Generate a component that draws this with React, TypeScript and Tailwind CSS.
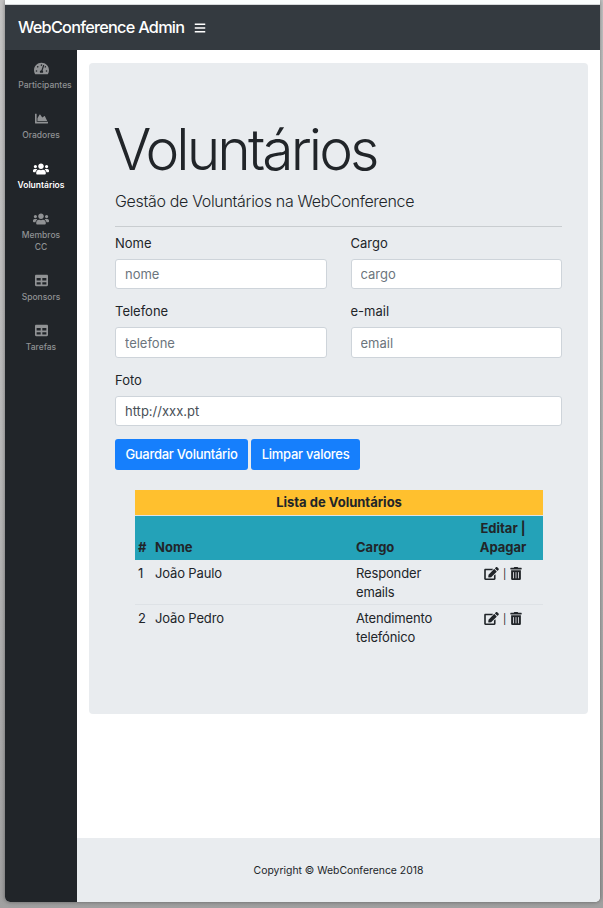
import type { ReactNode } from "react";
import {
  FaBars,
  FaChartArea,
  FaEdit,
  FaTable,
  FaTachometerAlt,
  FaTrashAlt,
  FaUsers,
} from "react-icons/fa";

function NavItem({
  icon,
  label,
  active = false,
  height = "h-[50px]",
}: {
  icon: ReactNode;
  label: ReactNode;
  active?: boolean;
  height?: string;
}) {
  return (
    <li className={height}>
      <a
        className={`flex flex-col items-center pt-[11px] text-[8.5px] leading-3 ${
          active ? "font-semibold text-white" : "font-medium text-[#909294]"
        }`}
      >
        <span className="flex h-[18px] items-center pb-[3px] text-[13px]">{icon}</span>
        <span className="whitespace-nowrap text-center">{label}</span>
      </a>
    </li>
  );
}

function Field({
  label,
  placeholder,
  value,
  inputHeight = "h-[31px]",
}: {
  label: string;
  placeholder?: string;
  value?: string;
  inputHeight?: string;
}) {
  return (
    <label className="block h-[69px]">
      <span className="block h-[26px] pt-px leading-[19px]">{label}</span>
      <input
        className={`block w-full rounded-[3px] border border-[#ced4da] bg-white px-[9px] text-[13px] text-[#495057] placeholder:text-[#6c757d] placeholder:opacity-100 ${inputHeight}`}
        placeholder={placeholder}
        defaultValue={value}
      />
    </label>
  );
}

const volunteers = [
  { id: 1, name: "João Paulo", role: "Responder emails", rule: "border-b" },
  { id: 2, name: "João Pedro", role: "Atendimento telefónico", rule: "" },
];

export default function App() {
  return (
    <div className="h-[908px] w-[603px] overflow-hidden bg-gradient-to-b from-[#c4c4c4] via-[#b8b8b8] to-[#a0a0a0] pl-[5px] font-['Inter','Liberation_Sans',sans-serif] text-[13px] leading-[19px] text-[#212529]">
      <div className="flex h-[902px] w-[595px] flex-col overflow-hidden rounded-b-[5px] bg-white shadow-[0_0_4px_rgba(0,0,0,0.4)]">
        <div className="h-[5px] shrink-0 border-b border-[#d5d8da] bg-[#fbfefe]" />
        <nav className="flex h-[45px] shrink-0 items-center bg-[#343a40] pl-[13px] text-white">
          <span className="text-[16.3px] font-medium tracking-[-0.75px]">WebConference Admin</span>
          <FaBars className="ml-[10px] size-[12px]" />
        </nav>
        <div className="flex min-h-0 flex-1">
          <ul className="w-[72px] shrink-0 bg-[#212529]">
            <NavItem
              icon={<FaTachometerAlt className="text-[15px]" />}
              label={<span className="pl-[8px]">Participantes</span>}
            />
            <NavItem icon={<FaChartArea />} label="Oradores" />
            <NavItem icon={<FaUsers className="text-[16px]" />} label="Voluntários" active />
            <NavItem
              icon={<FaUsers className="text-[16px]" />}
              label={<>Membros<br />CC</>}
              height="h-[62px]"
            />
            <NavItem icon={<FaTable />} label="Sponsors" />
            <NavItem icon={<FaTable />} label="Tarefas" />
          </ul>
          <div className="flex flex-1 flex-col justify-between">
            <main className="ml-3 mr-[12px] mt-[13px] h-[651px] w-[499px] rounded-[4px] bg-[#e9ecef] px-[26px] pt-[52px]">
              <h1 className="-ml-[2px] h-[76px] whitespace-nowrap text-[57px] font-light leading-[69px] tracking-[-2.95px]">
                Voluntários
              </h1>
              <p className="h-[35px] text-[16px] font-light leading-[20px] tracking-[-0.33px]">
                Gestão de Voluntários na WebConference
              </p>
              <hr className="border-[#c9cdd0]" />
              <form className="pt-[5px]">
                <div className="grid grid-cols-2 gap-x-6 pt-px">
                  <Field label="Nome" placeholder="nome" inputHeight="h-[30px]" />
                  <Field label="Cargo" placeholder="cargo" inputHeight="h-[30px]" />
                </div>
                <div className="-mt-px grid grid-cols-2 gap-x-6">
                  <Field label="Telefone" placeholder="telefone" />
                  <Field label="e-mail" placeholder="email" />
                </div>
                <Field label="Foto" value="http://xxx.pt" inputHeight="h-[30px]" />
                <div className="flex gap-[3px] font-medium tracking-[-0.27px] text-white">
                  <button type="button" className="h-[31px] w-[133px] whitespace-nowrap rounded-[3px] bg-[#167ffc]">
                    Guardar Voluntário
                  </button>
                  <button type="button" className="h-[31px] w-[109px] whitespace-nowrap rounded-[3px] bg-[#167ffc]">
                    Limpar valores
                  </button>
                </div>
              </form>
              <table className="mx-5 mt-5 w-[408px] table-fixed border-separate border-spacing-0 text-left">
                <colgroup>
                  <col className="w-[17px]" />
                  <col className="w-[201px]" />
                  <col className="w-[110px]" />
                  <col className="w-[80px]" />
                </colgroup>
                <thead>
                  <tr className="bg-[#ffc02e]">
                    <th colSpan={4} className="h-[26px] border-b border-[#dee2e6] p-0 text-center font-bold">
                      Lista de Voluntários
                    </th>
                  </tr>
                  <tr className="h-[44px] bg-[#24a2b8] align-bottom">
                    <th className="p-[3px]">#</th>
                    <th className="p-[3px]">Nome</th>
                    <th className="p-[3px]">Cargo</th>
                    <th className="p-[3px] text-center">
                      Editar |<br />Apagar
                    </th>
                  </tr>
                </thead>
                <tbody className="tracking-[-0.15px]">
                  {volunteers.map((v) => (
                    <tr key={v.id} className="h-[45px] align-top">
                      <td className={`border-[#dee2e6] px-[3px] pb-[2px] pt-[4px] ${v.rule}`}>{v.id}</td>
                      <td className={`border-[#dee2e6] px-[3px] pb-[2px] pt-[4px] ${v.rule}`}>{v.name}</td>
                      <td className={`border-[#dee2e6] pb-[2px] pl-[3px] pr-[20px] pt-[4px] ${v.rule}`}>{v.role}</td>
                      <td className={`border-[#dee2e6] px-[3px] pb-[2px] pt-[4px] ${v.rule}`}>
                        <div className="flex h-[19px] items-center justify-center gap-[4px]">
                          <FaEdit className="h-[13px] w-[15px]" />
                          <span className="pt-[2px] text-[10px]">|</span>
                          <FaTrashAlt className="h-[13px] w-[12px]" />
                        </div>
                      </td>
                    </tr>
                  ))}
                </tbody>
              </table>
            </main>
            <footer className="flex h-16 items-center justify-center bg-[#e9ecef] text-[10.4px]">
              Copyright © WebConference 2018
            </footer>
          </div>
        </div>
      </div>
    </div>
  );
}
